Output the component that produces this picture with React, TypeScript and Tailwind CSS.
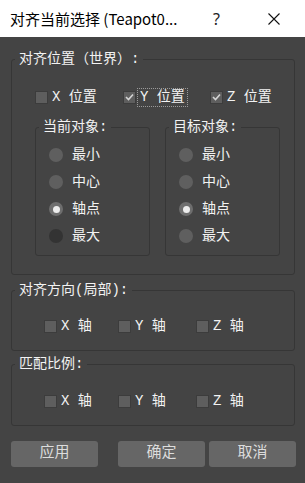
import type { ReactNode } from 'react';

const FONT = { fontFamily: '"Liberation Mono", "Noto Sans CJK SC", monospace' };

function Group({ label, className, children }: { label: string; className: string; children: ReactNode }) {
  return (
    <div className={`flex flex-col rounded-[3px] border border-[#363636] ${className}`}>
      <div className="-mt-[9px] ml-[3px] w-fit bg-[#444444] px-[4px] text-[14px] leading-4 text-[#f2f2f2]">
        {label}
      </div>
      {children}
    </div>
  );
}

function Check({ label, checked, focus, width }: { label: string; checked?: boolean; focus?: boolean; width: string }) {
  return (
    <div className={`flex h-4 items-center ${width}`}>
      <span className="flex h-[13px] w-[13px] items-center justify-center border border-[#3c3c3c] bg-[#5e5e5e]">
        {checked && (
          <svg width="9" height="8" viewBox="0 0 9 8">
            <path d="M1 4 L3.5 6.5 L8 1.5" fill="none" stroke="#d4d4d4" strokeWidth="1.6" />
          </svg>
        )}
      </span>
      <span
        className={`ml-[1px] flex h-[19px] items-center pl-[2px] pr-[2px] text-[14px] leading-4 text-[#f2f2f2] ${
          focus ? 'border border-dotted border-[#9a9a9a]' : 'border border-transparent'
        }`}
      >
        {label}
      </span>
    </div>
  );
}

function Radio({ label, state }: { label: string; state: 'off' | 'on' | 'dark' }) {
  return (
    <div className="flex h-4 items-center">
      <span
        className={`flex h-[14px] w-[14px] items-center justify-center rounded-full ${
          state === 'dark' ? 'bg-[#333333]' : state === 'on' ? 'bg-[#6e6e6e]' : 'bg-[#5f5f5f]'
        }`}
      >
        {state === 'on' && <span className="h-[7px] w-[7px] rounded-full bg-[#ececec]" />}
      </span>
      <span className="ml-[9px] text-[14px] leading-4 text-[#f2f2f2]">{label}</span>
    </div>
  );
}

function Target({ label, dark }: { label: string; dark?: boolean }) {
  return (
    <Group label={label} className="w-[115px]">
      <div className="mt-3 flex flex-col gap-[11px] pb-[11px] pl-[13px]">
        <Radio label="最小" state="off" />
        <Radio label="中心" state="off" />
        <Radio label="轴点" state="on" />
        <Radio label="最大" state={dark ? 'dark' : 'off'} />
      </div>
    </Group>
  );
}

function AxisRow() {
  return (
    <div className="flex pl-[32px]">
      <Check label="X 轴" width="w-[74px]" />
      <Check label="Y 轴" width="w-[78px]" />
      <Check label="Z 轴" width="w-[70px]" />
    </div>
  );
}

export default function App() {
  return (
    <div className="flex h-[483px] w-[305px] flex-col overflow-hidden bg-[#444444]" style={FONT}>
      <div className="flex h-[37px] shrink-0 items-center bg-white pl-[10px]">
        <span className="text-[15px] leading-5 text-black" style={{ fontFamily: '"Noto Sans CJK SC", sans-serif' }}>
          对齐当前选择 (Teapot0...
        </span>
        <span className="ml-auto text-[16px] text-[#222]" style={{ fontFamily: '"Noto Sans", sans-serif' }}>?</span>
        <svg className="ml-[48px] mr-[25px]" width="12" height="12" viewBox="0 0 12 12">
          <path d="M0.5 0.5 L11.5 11.5 M11.5 0.5 L0.5 11.5" stroke="#111" strokeWidth="1.1" />
        </svg>
      </div>

      <Group label="对齐位置（世界）:" className="ml-[11px] mr-[10px] mt-[22px]">
        <div className="mt-[22px] flex pl-[23px]">
          <Check label="X 位置" width="w-[88px]" />
          <Check label="Y 位置" checked focus width="w-[87px]" />
          <Check label="Z 位置" checked width="w-[80px]" />
        </div>
        <div className="mt-[22px] flex gap-[15px] pb-[18px] pl-[23px]">
          <Target label="当前对象:" dark />
          <Target label="目标对象:" />
        </div>
      </Group>

      <Group label="对齐方向(局部):" className="ml-[11px] mr-[10px] mt-[15px]">
        <div className="mt-5 pb-4">
          <AxisRow />
        </div>
      </Group>

      <Group label="匹配比例:" className="ml-[11px] mr-[10px] mt-[13px]">
        <div className="mt-[21px] pb-4">
          <AxisRow />
        </div>
      </Group>

      <div className="ml-[11px] mt-[15px] flex">
        <button className="h-[26px] w-[87px] rounded-[3px] bg-[#666666] text-[15px] text-[#dcdcdc]">应用</button>
        <button className="ml-[20px] h-[26px] w-[87px] rounded-[3px] bg-[#666666] text-[15px] text-[#dcdcdc]">确定</button>
        <button className="ml-[4px] h-[26px] w-[87px] rounded-[3px] bg-[#666666] text-[15px] text-[#dcdcdc]">取消</button>
      </div>
    </div>
  );
}
